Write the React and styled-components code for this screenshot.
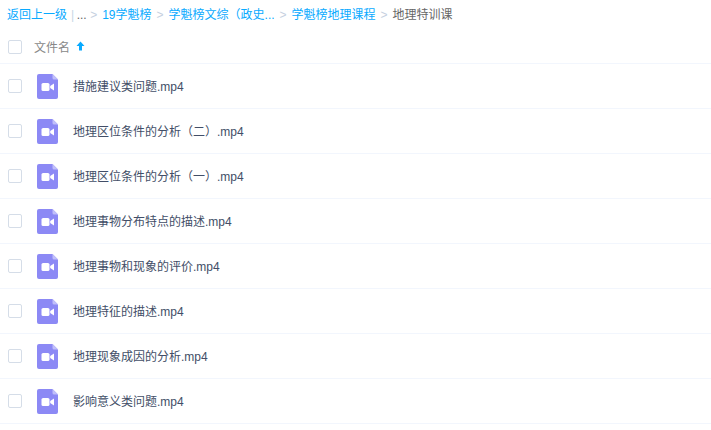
import styled, { createGlobalStyle } from 'styled-components';

const GlobalStyle = createGlobalStyle`
  html, body {
    margin: 0;
    background: #fff;
    overflow: hidden;
  }
  body {
    font-family: "Liberation Sans", "Noto Sans CJK SC", sans-serif;
    font-size: 12px;
  }
`;

const Page = styled.div`
  width: 711px;
  height: 430px;
`;

const Breadcrumb = styled.div`
  display: flex;
  align-items: center;
  height: 30px;
  padding-left: 7px;
  color: #666;
  line-height: 30px;
  white-space: nowrap;
`;

const CrumbLink = styled.a`
  color: #09aaff;
`;

const Divider = styled.span`
  color: #c7d7e5;
  margin: 0 2.5px 0 4px;
`;

const Dots = styled.span`
  color: #666;
  margin-right: -1.5px;
`;

const Arrow = styled.span`
  color: #c5d0e0;
  margin: 0 5px;
`;

const HeaderRow = styled.div`
  display: flex;
  align-items: center;
  height: 33px;
  border-bottom: 1px solid #f2f6fd;
`;

const RowItem = styled.div`
  display: flex;
  align-items: center;
  height: 44px;
  border-bottom: 1px solid #f2f6fd;
`;

const CheckBox = styled.span`
  width: 12px;
  height: 12px;
  margin-left: 8px;
  border: 1px solid #d5dde8;
  border-radius: 2px;
  flex: none;
`;

const HeaderLabel = styled.span`
  margin-left: 12px;
  margin-bottom: 1px;
  color: #888;
  display: flex;
  align-items: center;
`;

const SortIcon = styled.svg`
  width: 9px;
  height: 10px;
  margin-left: 6px;
`;

const FileIcon = styled.svg`
  width: 21px;
  height: 25px;
  margin-left: 15px;
  margin-top: 1px;
  flex: none;
`;

const FileName = styled.span`
  margin-left: 15px;
  margin-bottom: 2px;
  color: #424e67;
`;

const files = [
  '措施建议类问题.mp4',
  '地理区位条件的分析（二）.mp4',
  '地理区位条件的分析（一）.mp4',
  '地理事物分布特点的描述.mp4',
  '地理事物和现象的评价.mp4',
  '地理特征的描述.mp4',
  '地理现象成因的分析.mp4',
  '影响意义类问题.mp4',
];

const crumbs = ['19学魁榜', '学魁榜文综（政史...', '学魁榜地理课程'];

const VideoIcon = () => (
  <FileIcon viewBox="0 0 21 25">
    <path d="M2 0h13.5L21 5.5V23a2 2 0 0 1-2 2H2a2 2 0 0 1-2-2V2a2 2 0 0 1 2-2z" fill="#8c89f5" />
    <path d="M15.5 0L21 5.5h-4a1.5 1.5 0 0 1-1.5-1.5z" fill="#c0bffa" />
    <rect x="4.5" y="9" width="8" height="8" rx="1.6" fill="#fff" />
    <path d="M13.2 12l3.8-2.4v6.8L13.2 14z" fill="#fff" />
  </FileIcon>
);

const App = () => (
  <Page>
    <GlobalStyle />
    <Breadcrumb>
      <CrumbLink>返回上一级</CrumbLink>
      <Divider>|</Divider>
      <Dots>...</Dots>
      {crumbs.map(crumb => (
        <span key={crumb}>
          <Arrow>&gt;</Arrow>
          <CrumbLink>{crumb}</CrumbLink>
        </span>
      ))}
      <Arrow>&gt;</Arrow>
      <span>地理特训课</span>
    </Breadcrumb>
    <HeaderRow>
      <CheckBox />
      <HeaderLabel>
        文件名
        <SortIcon viewBox="0 0 9 10">
          <path d="M4.5 0.5L8.5 5H6v4.5H3V5H0.5z" fill="#09aaff" />
        </SortIcon>
      </HeaderLabel>
    </HeaderRow>
    {files.map(file => (
      <RowItem key={file}>
        <CheckBox />
        <VideoIcon />
        <FileName>{file}</FileName>
      </RowItem>
    ))}
  </Page>
);

export default App;
